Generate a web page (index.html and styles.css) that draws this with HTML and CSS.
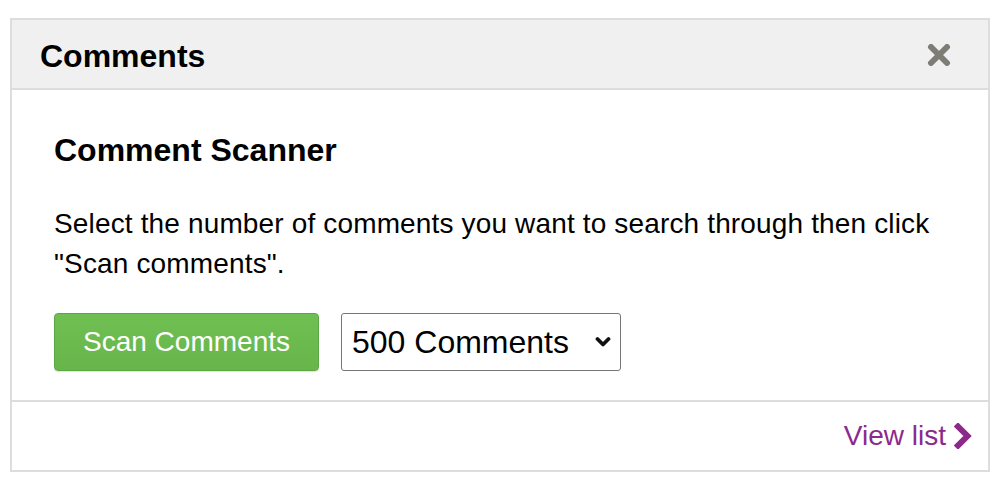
FILE: index.html
```html
<!DOCTYPE html>
<html>
<head>
<meta charset="utf-8">
<link rel="stylesheet" href="styles.css">
</head>
<body>
<div class="wrap">
  <div class="panel">
    <div class="panel-header">
      <h2 class="panel-title">Comments</h2>
      <svg class="close-icon" width="24" height="22" viewBox="0 0 24 22">
        <path d="M4 3 L20 19 M20 3 L4 19" stroke="#7d7c75" stroke-width="6" stroke-linecap="round"/>
      </svg>
    </div>
    <div class="panel-body">
      <h3 class="section-title">Comment Scanner</h3>
      <p class="desc">Select the number of comments you want to search through then click "Scan comments".</p>
      <div class="controls">
        <button class="btn-scan">Scan Comments</button>
        <div class="select">
          <span class="select-value">500 Comments</span>
          <svg class="select-arrow" width="16" height="12" viewBox="0 0 16 12">
            <path d="M2.5 3 L8 8.5 L13.5 3" fill="none" stroke="#111" stroke-width="3.8" stroke-linecap="round" stroke-linejoin="round"/>
          </svg>
        </div>
      </div>
    </div>
    <div class="panel-footer">
      <a class="view-link" href="#">View list
        <svg class="chev" width="18" height="26" viewBox="0 0 18 26">
          <path d="M4 3.5 L13.5 13 L4 22.5" fill="none" stroke="#8c2a8c" stroke-width="6" stroke-linecap="square"/>
        </svg>
      </a>
    </div>
  </div>
</div>
</body>
</html>
```
FILE: styles.css
```css
* { box-sizing: border-box; }
html, body { margin: 0; padding: 0; background: #fff; }
body { font-family: "Liberation Sans", Arial, sans-serif; color: #000; }
.wrap { padding: 18px 16px 0 10px; }
.panel { width: 980px; border: 2px solid #dddddd; }
.panel-header {
  height: 70px;
  background: #f0f0f0;
  border-bottom: 2px solid #dddddd;
  display: flex;
  align-items: center;
  justify-content: space-between;
  padding: 3px 37px 0 28px;
}
.panel-title { margin: 0; font-size: 32px; font-weight: bold; line-height: 38px; }
.close-icon { display: block; margin-top: -1px; }
.panel-body { padding: 41px 42px 29px; border-bottom: 2px solid #dddddd; }
.section-title { margin: 0; font-size: 32px; font-weight: bold; line-height: 38px; }
.desc { margin: 35px 0 0; font-size: 28px; line-height: 40px; letter-spacing: 0.15px; }
.controls { display: flex; gap: 22px; margin-top: 29px; }
.btn-scan {
  width: 265px; height: 58px;
  background: linear-gradient(#70bf53, #68b64b);
  border: 1px solid #5ca743;
  border-radius: 4px;
  color: #fff;
  font-family: "Liberation Sans", Arial, sans-serif;
  font-size: 28px;
  padding: 0;
  box-shadow: 0 1px 1px rgba(0,0,0,0.12);
}
.select {
  width: 280px; height: 58px;
  border: 1px solid #767676;
  border-radius: 3px;
  display: flex; align-items: center; justify-content: space-between;
  padding: 0 9px 0 10px;
  font-size: 32px;
}
.select-arrow { display: block; }
.panel-footer {
  height: 68px;
  display: flex; align-items: center; justify-content: flex-end;
  padding: 0 16px 0 0;
}
.view-link {
  color: #8c2a8c; text-decoration: none; font-size: 28px;
  display: flex; align-items: center; gap: 8px;
}
.chev { display: block; }
```
